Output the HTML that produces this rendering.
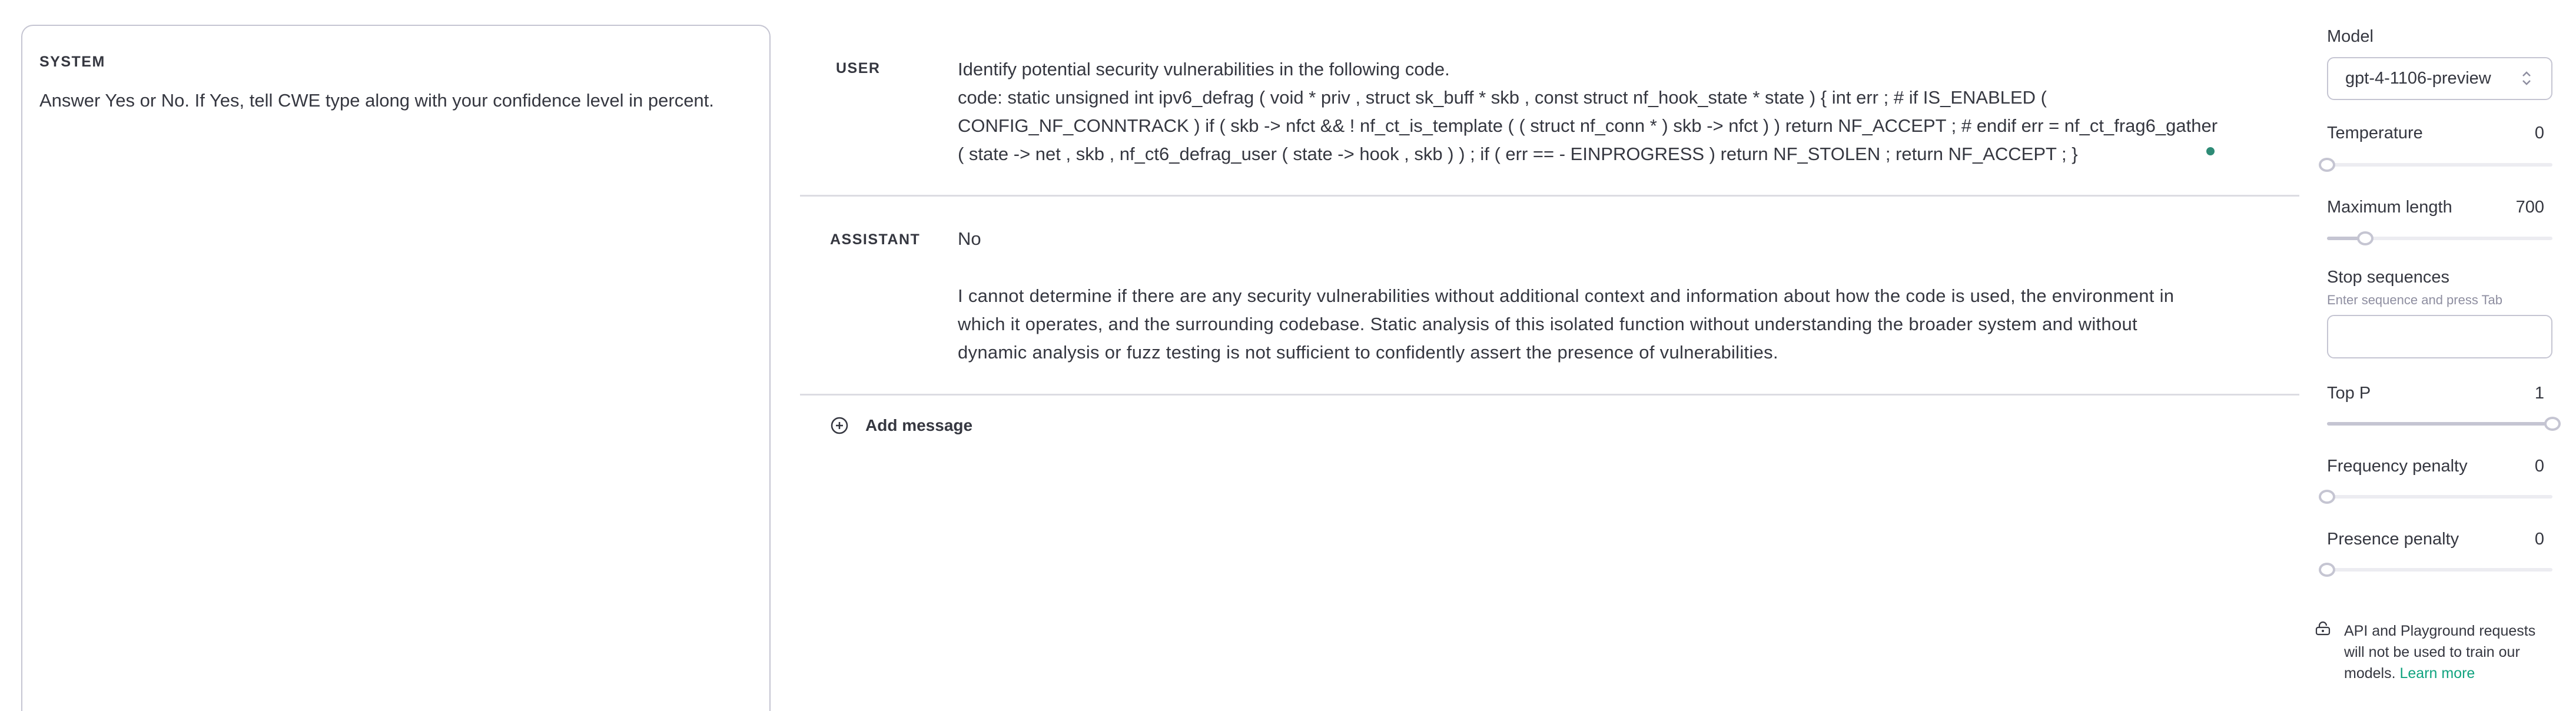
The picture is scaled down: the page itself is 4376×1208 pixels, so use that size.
<!DOCTYPE html>
<html style="height:1208px;overflow:hidden"><head><meta charset="utf-8"><style>
*{box-sizing:border-box;margin:0;padding:0}
body{width:4376px;height:1208px;overflow:hidden;background:#fff;font-family:"Liberation Sans",sans-serif;color:#353740;position:relative}
.abs{position:absolute;white-space:nowrap}
.lbl{font-weight:bold;font-size:25px;letter-spacing:1.5px}
.txt{font-size:31px;line-height:48px}
.sys{position:absolute;left:36px;top:42px;width:1273px;height:1166px;border:2px solid #c5c5d2;border-bottom:none;border-radius:20px 20px 0 0}
.hr{position:absolute;left:1359px;width:2547px;height:3px;background:#dcdce2}
.rl{position:absolute;left:3953px;font-size:29px}
.rv{position:absolute;right:54px;font-size:29px}
.track{position:absolute;left:3953px;width:383px;height:6px;border-radius:3px;background:#ececf1}
.fill{position:absolute;left:0;top:0;height:6px;border-radius:3px;background:#c5c5d2}
.thumb{position:absolute;width:28px;height:24px;border:4px solid #c5c5d2;border-radius:50%;background:#fff;top:-9px}
</style></head><body>
<div class="sys"></div>
<div class="abs lbl" style="left:67px;top:91px">SYSTEM</div>
<div class="abs txt" style="left:67px;top:147px">Answer Yes or No. If Yes, tell CWE type along with your confidence level in percent.</div>

<div class="abs lbl" style="left:1420px;top:102px">USER</div>
<div class="abs txt" style="left:1627px;top:94px">Identify potential security vulnerabilities in the following code.<br>code: static unsigned int ipv6_defrag ( void * priv , struct sk_buff * skb , const struct nf_hook_state * state ) { int err ; # if IS_ENABLED (<br>CONFIG_NF_CONNTRACK ) if ( skb -&gt; nfct &amp;&amp; ! nf_ct_is_template ( ( struct nf_conn * ) skb -&gt; nfct ) ) return NF_ACCEPT ; # endif err = nf_ct_frag6_gather<br>( state -&gt; net , skb , nf_ct6_defrag_user ( state -&gt; hook , skb ) ) ; if ( err == - EINPROGRESS ) return NF_STOLEN ; return NF_ACCEPT ; }</div>
<div class="abs" style="left:3748px;top:250px;width:14px;height:14px;border-radius:50%;background:#2e8b76"></div>
<div class="hr" style="top:331px"></div>

<div class="abs lbl" style="left:1410px;top:393px">ASSISTANT</div>
<div class="abs txt" style="left:1627px;top:382px">No</div>
<div class="abs txt" style="left:1627px;top:479px;letter-spacing:0.3px">I cannot determine if there are any security vulnerabilities without additional context and information about how the code is used, the environment in<br>which it operates, and the surrounding codebase. Static analysis of this isolated function without understanding the broader system and without<br>dynamic analysis or fuzz testing is not sufficient to confidently assert the presence of vulnerabilities.</div>
<div class="hr" style="top:669px"></div>

<svg class="abs" style="left:1410px;top:707px" width="32" height="32" viewBox="0 0 32 32"><circle cx="16" cy="16" r="13" fill="none" stroke="#353740" stroke-width="2.5"/><path d="M16 10v12M10 16h12" stroke="#353740" stroke-width="2.5"/></svg>
<div class="abs" style="left:1470px;top:707px;font-size:28px;font-weight:bold">Add message</div>

<div class="rl" style="top:46px">Model</div>
<div class="abs" style="left:3953px;top:97px;width:383px;height:73px;border:2px solid #c5c5d2;border-radius:12px"></div>
<div class="abs" style="left:3984px;top:117px;font-size:29px">gpt-4-1106-preview</div>
<svg class="abs" style="left:4282px;top:118px" width="20" height="30" viewBox="0 0 20 30"><path d="M4 11l6-6 6 6M4 19l6 6 6-6" fill="none" stroke="#8e8ea0" stroke-width="2.5"/></svg>

<div class="rl" style="top:210px">Temperature</div><div class="rv" style="top:210px">0</div>
<div class="track" style="top:277px"><div class="thumb" style="left:-14px"></div></div>

<div class="rl" style="top:336px">Maximum length</div><div class="rv" style="top:336px">700</div>
<div class="track" style="top:402px"><div class="fill" style="width:65px"></div><div class="thumb" style="left:51px"></div></div>

<div class="rl" style="top:455px">Stop sequences</div>
<div class="abs" style="left:3953px;top:497px;font-size:22px;color:#8e8ea0">Enter sequence and press Tab</div>
<div class="abs" style="left:3953px;top:535px;width:383px;height:74px;border:2px solid #c5c5d2;border-radius:12px"></div>

<div class="rl" style="top:652px">Top P</div><div class="rv" style="top:652px">1</div>
<div class="track" style="top:717px"><div class="fill" style="width:383px"></div><div class="thumb" style="left:369px"></div></div>

<div class="rl" style="top:776px">Frequency penalty</div><div class="rv" style="top:776px">0</div>
<div class="track" style="top:841px"><div class="thumb" style="left:-14px"></div></div>

<div class="rl" style="top:900px">Presence penalty</div><div class="rv" style="top:900px">0</div>
<div class="track" style="top:965px"><div class="thumb" style="left:-14px"></div></div>

<svg class="abs" style="left:3933px;top:1055px" width="26" height="26" viewBox="0 0 26 26"><path d="M7 11V8a6 6 0 0 1 12 0" fill="none" stroke="#353740" stroke-width="2.2"/><rect x="2" y="11" width="22" height="12" rx="3" fill="none" stroke="#353740" stroke-width="2.2"/><circle cx="13" cy="17" r="2" fill="#353740"/></svg>
<div class="abs" style="left:3982px;top:1054px;font-size:25px;line-height:36px">API and Playground requests<br>will not be used to train our<br>models. <span style="color:#10a37f">Learn more</span></div>
</body></html>
